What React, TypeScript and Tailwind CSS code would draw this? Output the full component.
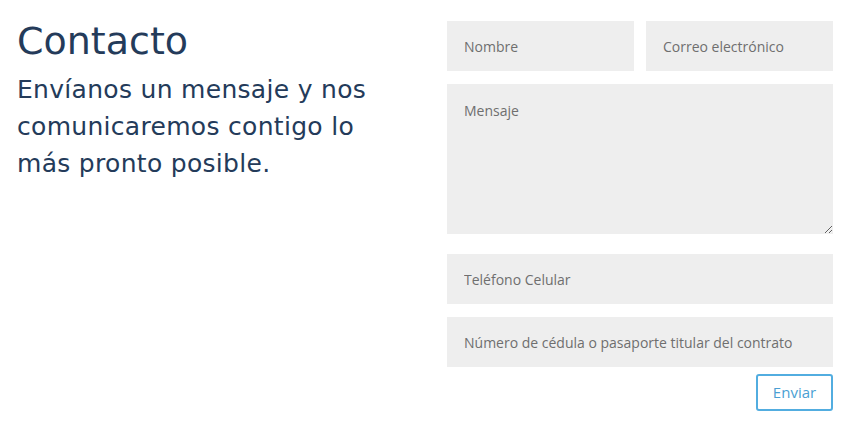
import React from "react";

export default function App() {
  const field =
    "w-full h-[50px] bg-[#eeeeee] px-[17px] text-[14px] text-[#555] placeholder:text-[#6f6f6f] outline-none border-0";
  return (
    <div className="w-[847px] h-[438px] bg-white flex" style={{ fontFamily: '"Open Sans", sans-serif' }}>
      <div className="w-[447px] pl-[17px] pt-[18px]">
        <h1
          className="text-[38px] leading-[46px] text-[#243b5a]"
          style={{ fontFamily: '"DejaVu Sans", sans-serif' }}
        >
          Contacto
        </h1>
        <p
          className="mt-[7px] text-[25px] leading-[37px] text-[#243b5a] tracking-[0.3px]"
          style={{ fontFamily: '"DejaVu Sans", sans-serif' }}
        >
          Envíanos un mensaje y nos
          <br />
          comunicaremos contigo lo
          <br />
          más pronto posible.
        </p>
      </div>
      <form className="w-[386px] pt-[21px] flex flex-col">
        <div className="flex gap-[12px]">
          <input className={field} placeholder="Nombre" />
          <input className={field} placeholder="Correo electrónico" />
        </div>
        <textarea
          className="mt-[13px] w-full h-[150px] bg-[#eeeeee] px-[17px] pt-[16px] text-[14px] text-[#555] placeholder:text-[#6f6f6f] outline-none border-0 block"
          placeholder="Mensaje"
        />
        <input className={field + " mt-[20px]"} placeholder="Teléfono Celular" />
        <input className={field + " mt-[13px]"} placeholder="Número de cédula o pasaporte titular del contrato" />
        <div className="flex justify-end mt-[7px]">
          <button
            type="button"
            className="w-[77px] h-[37px] border-2 border-[#52ade0] rounded-[3px] text-[15px] text-[#4a9fd3] bg-white"
          >
            Enviar
          </button>
        </div>
      </form>
    </div>
  );
}
